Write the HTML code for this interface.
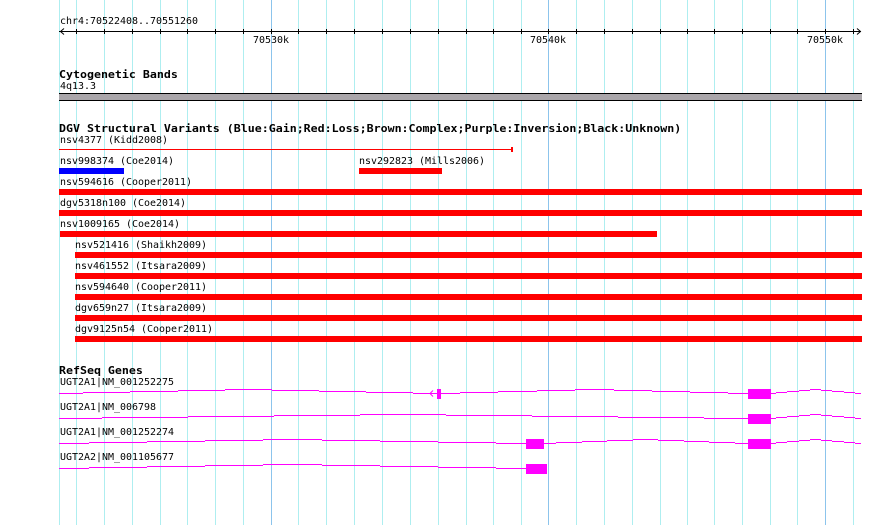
<!DOCTYPE html>
<html>
<head>
<meta charset="utf-8">
<title>chr4:70522408..70551260</title>
<style>
html,body{margin:0;padding:0;background:#fff;width:890px;height:525px;overflow:hidden}
svg{display:block}
text{font-family:"DejaVu Sans Mono","Liberation Mono",monospace;font-size:9.97px;fill:#000;white-space:pre}
text.b{font-weight:bold;font-size:11.63px}
</style>
</head>
<body>
<svg width="890" height="525" viewBox="0 0 890 525" xmlns="http://www.w3.org/2000/svg">
<rect width="890" height="525" fill="#fff"/>
<g shape-rendering="crispEdges" fill="none" stroke-width="1">
<path stroke="#aeeef0" d="M59.5 0V525M76.5 0V525M104.5 0V525M132.5 0V525M160.5 0V525M187.5 0V525M215.5 0V525M243.5 0V525M298.5 0V525M326.5 0V525M354.5 0V525M382.5 0V525M410.5 0V525M438.5 0V525M466.5 0V525M493.5 0V525M521.5 0V525M576.5 0V525M604.5 0V525M632.5 0V525M660.5 0V525M687.5 0V525M714.5 0V525M742.5 0V525M770.5 0V525M797.5 0V525M853.5 0V525"/>
<path stroke="#8cc4ec" d="M271.5 0V525M548.5 0V525M825.5 0V525"/>
<path stroke="#000" d="M59 31.5H861M76.5 29V34M104.5 29V34M132.5 29V34M160.5 29V34M187.5 29V34M215.5 29V34M243.5 29V34M271.5 29V34M298.5 29V34M326.5 29V34M354.5 29V34M382.5 29V34M410.5 29V34M438.5 29V34M466.5 29V34M493.5 29V34M521.5 29V34M548.5 29V34M576.5 29V34M604.5 29V34M632.5 29V34M660.5 29V34M687.5 29V34M714.5 29V34M742.5 29V34M770.5 29V34M797.5 29V34M825.5 29V34M853.5 29V34"/>
</g>
<path d="M64 28.5L60.5 31.5L64 34.5M857 28.5L860.5 31.5L857 34.5" fill="none" stroke="#000" stroke-width="1"/>

<g shape-rendering="crispEdges">
<rect x="59" y="93" width="803" height="8" fill="#000"/>
<rect x="59" y="94" width="803" height="6" fill="#aaa6aa"/>

<rect x="59" y="149" width="453" height="1" fill="#f00"/>
<rect x="511" y="147" width="2" height="5" fill="#f00"/>
<rect x="59" y="168" width="65" height="6" fill="#00f"/>
<rect x="359" y="168" width="83" height="6" fill="#f00"/>
<rect x="59" y="189" width="803" height="6" fill="#f00"/>
<rect x="59" y="210" width="803" height="6" fill="#f00"/>
<rect x="60" y="231" width="597" height="6" fill="#f00"/>
<rect x="75" y="252" width="787" height="6" fill="#f00"/>
<rect x="75" y="273" width="787" height="6" fill="#f00"/>
<rect x="75" y="294" width="787" height="6" fill="#f00"/>
<rect x="75" y="315" width="787" height="6" fill="#f00"/>
<rect x="75" y="336" width="787" height="6" fill="#f00"/>

<g fill="none" stroke="#f0f" stroke-width="1">
<path d="M59 393.5H83M83 392.5H130M130 391.5H178M178 390.5H225M225 389.5H272M272 390.5H319M319 391.5H366M366 392.5H413M413 393.5H460M460 392.5H498M498 391.5H537M537 390.5H575M575 389.5H614M614 390.5H652M652 391.5H690M690 392.5H728M728 393.5H748M771 393.5H776M776 392.5H787M787 391.5H799M799 390.5H810M810 389.5H821M821 390.5H832M832 391.5H844M844 392.5H855M855 393.5H861"/>
<path d="M59 418.5H102M102 417.5H188M188 416.5H274M274 415.5H360M360 414.5H446M446 415.5H532M532 416.5H618M618 417.5H704M704 418.5H748M771 418.5H776M776 417.5H787M787 416.5H799M799 415.5H810M810 414.5H821M821 415.5H832M832 416.5H844M844 417.5H855M855 418.5H861"/>
<path d="M59 443.5H89M89 442.5H147M147 441.5H205M205 440.5H263M263 439.5H322M322 440.5H380M380 441.5H438M438 442.5H496M496 443.5H526M544 443.5H556M556 442.5H582M582 441.5H607M607 440.5H633M633 439.5H658M658 440.5H684M684 441.5H709M709 442.5H735M735 443.5H748M771 443.5H776M776 442.5H787M787 441.5H799M799 440.5H810M810 439.5H821M821 440.5H832M832 441.5H844M844 442.5H855M855 443.5H861"/>
<path d="M59 468.5H89M89 467.5H147M147 466.5H205M205 465.5H263M263 464.5H322M322 465.5H380M380 466.5H438M438 467.5H496M496 468.5H526"/>
</g>
<g fill="#f0f">
<rect x="437" y="389" width="4" height="10"/>
<rect x="748" y="389" width="23" height="10"/>
<rect x="748" y="414" width="23" height="10"/>
<rect x="526" y="439" width="18" height="10"/>
<rect x="748" y="439" width="23" height="10"/>
<rect x="526" y="464" width="21" height="10"/>
</g>
</g>
<path d="M433 390.5L430 393.5L433 396.5" fill="none" stroke="#f0f" stroke-width="1"/>

<text x="60" y="24">chr4:70522408..70551260</text>
<text x="253" y="43">70530k</text>
<text x="530" y="43">70540k</text>
<text x="807" y="43">70550k</text>

<text class="b" transform="translate(59 78) scale(1 .88)">Cytogenetic Bands</text>
<text x="60" y="89">4q13.3</text>

<text class="b" transform="translate(59 132) scale(1 .88)">DGV Structural Variants (Blue:Gain;Red:Loss;Brown:Complex;Purple:Inversion;Black:Unknown)</text>
<text x="60" y="143">nsv4377 (Kidd2008)</text>
<text x="60" y="164">nsv998374 (Coe2014)</text>
<text x="359" y="164">nsv292823 (Mills2006)</text>
<text x="60" y="185">nsv594616 (Cooper2011)</text>
<text x="60" y="206">dgv5318n100 (Coe2014)</text>
<text x="60" y="227">nsv1009165 (Coe2014)</text>
<text x="75" y="248">nsv521416 (Shaikh2009)</text>
<text x="75" y="269">nsv461552 (Itsara2009)</text>
<text x="75" y="290">nsv594640 (Cooper2011)</text>
<text x="75" y="311">dgv659n27 (Itsara2009)</text>
<text x="75" y="332">dgv9125n54 (Cooper2011)</text>

<text class="b" transform="translate(59 374) scale(1 .88)">RefSeq Genes</text>
<text x="60" y="385">UGT2A1|NM_001252275</text>
<text x="60" y="410">UGT2A1|NM_006798</text>
<text x="60" y="435">UGT2A1|NM_001252274</text>
<text x="60" y="460">UGT2A2|NM_001105677</text>
</svg>
</body>
</html>
